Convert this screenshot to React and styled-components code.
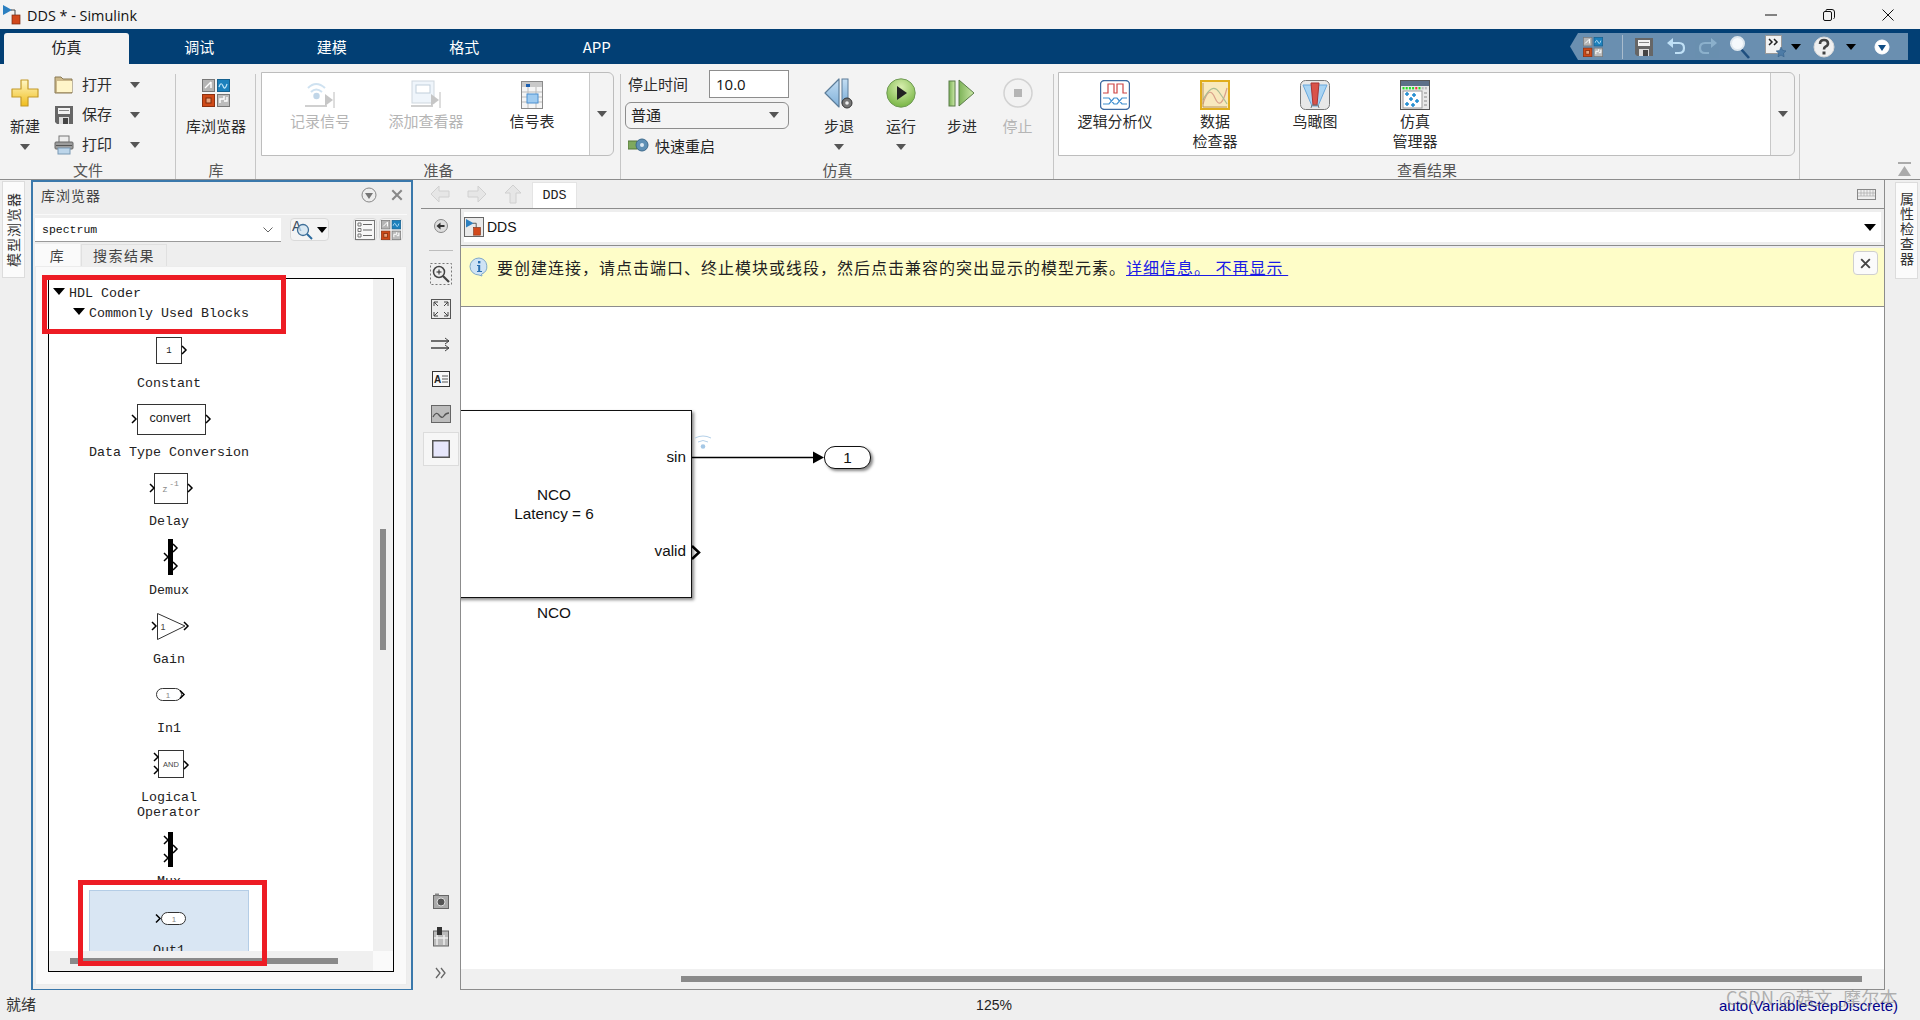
import React from "react";
import styled, { createGlobalStyle } from "styled-components";

const CJK = `"Noto Sans CJK SC", "Noto Sans", sans-serif`;
const MONO = `"Liberation Mono", "Noto Sans CJK SC", monospace`;
const ARIAL = `"Liberation Sans", Arial, sans-serif`;

const Global = createGlobalStyle`
  html, body { margin: 0; padding: 0; background: #efefef; }
  * { box-sizing: border-box; }
`;

const Page = styled.div`
  width: 1920px; height: 1020px; display: flex; flex-direction: column; overflow: hidden;
  font-family: ${CJK}; background: #efefef; color: #222; position: relative;
`;

/* ---------- Title bar ---------- */
const TitleBar = styled.div`
  height: 29px; background: #f3f3f3; display: flex; align-items: center; padding: 0 3px;
`;
const TitleText = styled.span`
  font-family: "Open Sans", sans-serif; font-size: 15px; margin-left: 4px; color: #111; transform: scaleX(.96); transform-origin: left;
`;
const WinControls = styled.div`display: flex; margin-left: auto;`;
const WinBtn = styled.div`width: 58.5px; height: 29px; display: flex; align-items: center; justify-content: center;`;

/* ---------- Tabs ---------- */
const TabStrip = styled.div`height: 35px; background: #023f74; display: flex; padding-left: 4px; align-items: flex-end;`;
const Tab = styled.div`
  width: ${p => p.$w}px; height: 31px; display: flex; align-items: center; justify-content: center; font-size: 15px;
  border-radius: 3px 3px 0 0; padding-bottom: 4px;
  color: ${p => (p.$active ? "#222" : "#fff")};
  background: ${p => (p.$active ? "#f3f3f3" : "transparent")};
  margin-right: ${p => p.$mr || 0}px;
`;
const Qat = styled.div`
  margin-left: auto; margin-right: 12px; height: 27px; margin-bottom: 4px; width: 338px; background: #6a8fb0; display: flex; align-items: center;
  clip-path: polygon(8px 0, 100% 0, 100% 100%, 8px 100%, 0 50%);
`;
const QatCell = styled.div`width: ${p => p.$w}px; height: 27px; display: flex; align-items: center; justify-content: center; padding-left: ${p => p.$pl || 0}px;`;
const QatSep = styled.div`width: 1px; height: 24px; background: #a9bccd;`;
const BlackTri = styled.div`width: 0; height: 0; border-left: 5px solid transparent; border-right: 5px solid transparent; border-top: 6px solid #000;`;

/* ---------- Ribbon ---------- */
const Ribbon = styled.div`height: 116px; background: #f3f3f3; display: flex; border-bottom: 1px solid #8c8c8c;`;
const Group = styled.div`
  width: ${p => p.$w}px; position: relative; height: 115px; padding-left: ${p => p.$pl || 0}px;
  &::after { content: ""; position: absolute; right: 0; top: 10px; bottom: 0; width: 1px; background: #c6c6c6; }
`;
const GroupBody = styled.div`display: flex; height: 98px;`;
const GroupLabel = styled.div`position: absolute; left: 0; right: 0; bottom: 0; height: 17px; line-height: 15px; text-align: center; font-size: 15px; color: #555;`;
const Large = styled.div`
  width: ${p => p.$w}px; display: flex; flex-direction: column; align-items: center; padding-top: 14px; flex: none;
`;
const IconBox = styled.div`height: ${p => p.$h || 30}px; display: flex; align-items: center; justify-content: center;`;
const RibbonText = styled.div`
  font-size: 15px; line-height: 20px; margin-top: ${p => p.$mt ?? 8}px; white-space: nowrap; text-align: center;
  color: ${p => (p.$off ? "#b5b5b5" : "#2b2b2b")};
`;
const GrayTri = styled.div`
  width: 0; height: 0; border-left: 5px solid transparent; border-right: 5px solid transparent; border-top: 6px solid #555; margin-top: ${p => p.$mt || 0}px;
`;
const FileCol = styled.div`display: flex; flex-direction: column; padding-top: 6px; margin-left: 4px;`;
const FileRow = styled.div`height: 30px; display: flex; align-items: center;`;
const FileIcon = styled.div`width: 20px; height: 20px; display: flex; align-items: center; justify-content: center; margin-right: 8px;`;
const FileText = styled.div`font-size: 15px; width: 30px; margin-right: 18px; color: #2b2b2b; padding-bottom: 3px;`;
const Gallery = styled.div`
  margin-top: 8px; height: 84px; width: ${p => p.$w}px; display: flex; border: 1px solid #bdbdbd; border-radius: 0 6px 6px 0; flex: none;
`;
const GalleryItems = styled.div`flex: 1; background: #fff; display: flex; padding-left: ${p => p.$pl}px;`;
const GalleryMore = styled.div`width: 24px; border-left: 1px solid #c8c8c8; display: flex; align-items: center; justify-content: center;`;
const GalleryBtn = styled.div`width: ${p => p.$w}px; display: flex; flex-direction: column; align-items: center; padding-top: 7px;`;
const SimSettings = styled.div`width: 164px; display: flex; flex-direction: column; padding-top: 6px; margin-right: 19px; flex: none;`;
const StopRow = styled.div`display: flex; align-items: center; justify-content: space-between; padding-left: 3px; height: 28px;`;
const SimLabel = styled.div`font-size: 15px; color: #2b2b2b; padding-bottom: 2px;`;
const StopInput = styled.div`width: 80px; height: 28px; border: 1px solid #8d8d8d; background: #fff; font-family: "Open Sans", sans-serif; font-size: 15px; line-height: 26px; padding-left: 6px; color: #111;`;
const ModeSelect = styled.div`
  margin-top: 4px; height: 27px; border: 1px solid #8d8d8d; border-radius: 6px; background: #f4f4f4; display: flex; align-items: center; justify-content: space-between;
  padding: 0 9px 2px 5px; font-size: 15px;
`;
const RestartRow = styled.div`margin-top: 5px; height: 24px; display: flex; align-items: center; gap: 5px; padding: 0 0 2px 3px; font-size: 15px;`;
const Collapse = styled.div`flex: 1; display: flex; align-items: flex-end; justify-content: flex-end; padding: 0 9px 3px 0;`;

/* ---------- Main ---------- */
const Main = styled.div`height: 810px; display: flex;`;
const LeftStrip = styled.div`width: 31px; flex: none; padding: 1px 0 0 2px;`;
const VTab = styled.div`
  width: 23px; height: 97px; background: #fbfbfb; border: 1px solid #dcdcdc; font-size: 14px; letter-spacing: 1px; color: #333;
  writing-mode: ${p => (p.$flip ? "sideways-lr" : "vertical-rl")}; display: flex; align-items: center; justify-content: center; line-height: 21px; padding-bottom: ${p => (p.$flip ? 0 : 3)}px;
`;
const LibPanel = styled.div`
  width: 382px; height: 811px; flex: none; border: 2px solid #3a78ab; background: #eee; position: relative; display: flex; flex-direction: column; padding: 0 4px 4px 2px;
`;
const PanelHead = styled.div`height: 32px; display: flex; align-items: center; padding: 0 0 6px 6px; font-size: 14px; letter-spacing: 1px; color: #444;`;
const PanelHeadIcons = styled.div`margin-left: auto; display: flex; align-items: center; gap: 14px; padding-right: 4px;`;
const ComboRow = styled.div`height: 30px; display: flex; align-items: flex-start; padding: 3px 0 0 0; border-top: 1px solid #f9f9f9;`;
const Combo = styled.div`
  width: 246px; height: 24px; background: #fff; border-bottom: 1px solid #9a9a9a; display: flex; align-items: center; justify-content: space-between;
  font-family: ${MONO}; font-size: 11.5px; padding: 0 8px 0 7px; color: #111; flex: none;
`;
const RoundBtn = styled.div`
  height: 23px; width: ${p => p.$w}px; margin-left: ${p => p.$ml}px; background: #f4f4f4; border: 1px solid #dadada; border-radius: 4px; display: flex; align-items: center; justify-content: center; flex: none; gap: 3px;
`;
const PanelTabs = styled.div`display: flex; height: 22px; flex: none;`;
const PanelTab = styled.div`
  width: ${p => p.$w}px; margin-right: 1px; display: flex; align-items: center; justify-content: center; font-size: 14px; letter-spacing: 1.5px; color: #444; padding-bottom: 2px;
  background: ${p => (p.$active ? "#fafafa" : "#eee")};
  border: 1px solid ${p => (p.$active ? "#fafafa" : "#e0e0e0")}; border-bottom: none;
`;
const PanelBody = styled.div`flex: 1; background: #fafafa; border: 1px solid #ececec; padding: 11px 12px 12px 12px; display: flex; min-height: 0;`;
const TreeFrame = styled.div`
  flex: 1; border: 1px solid #000; background: #fff; display: grid; grid-template-columns: 1fr 20px; grid-template-rows: 1fr 20px; min-height: 0; overflow: hidden;
`;
const TreeView = styled.div`overflow: hidden; padding-top: 4px; min-height: 0;`;
const TreeRow = styled.div`
  height: 20px; display: flex; align-items: center; padding-left: ${p => p.$indent}px; font-family: ${MONO}; font-size: 13.33px; color: #222; white-space: pre;
`;
const TreeArrow = styled.div`
  width: 0; height: 0; border-left: 6px solid transparent; border-right: 6px solid transparent; border-top: 7px solid #000; margin-right: 4px; margin-bottom: 4px;
`;
const ItemList = styled.div`margin-top: 12px; width: 240px; display: flex; flex-direction: column; align-items: center;`;
const Item = styled.div`
  width: 160px; margin-top: -12px; padding: 12px 0 13px; display: flex; flex-direction: column; align-items: center; flex: none;
  background: ${p => (p.$selected ? "#d9e6f3" : "transparent")};
  outline: ${p => (p.$selected ? "1px solid #b4cde6" : "none")};
  outline-offset: -1px;
`;
const ItemIcon = styled.svg`width: 100px; height: 30px; overflow: visible; display: block; flex: none;`;
const ItemLabel = styled.div`
  margin-top: 11px; font-family: ${MONO}; font-size: 13.33px; line-height: 15px; text-align: center; color: #222; white-space: pre-line;
`;
const VTrack = styled.div`background: #f0f0f0; padding-left: 7px;`;
const VThumb = styled.div`width: 6px; height: 121px; margin-top: 250px; background: #8a8a8a;`;
const HTrack = styled.div`background: #f0f0f0; padding: 7px 0 0 21px;`;
const HThumb = styled.div`width: 268px; height: 6px; background: #8a8a8a;`;
const Corner = styled.div`background: #fafafa;`;
const RedBox = styled.div`
  position: absolute; left: ${p => p.$x}px; top: ${p => p.$y}px; width: ${p => p.$w}px; height: ${p => p.$h}px; border: 5px solid #ed1c24; pointer-events: none;
`;

/* ---------- Editor ---------- */
const Editor = styled.div`width: 1464px; margin-left: 8px; flex: none; display: flex; flex-direction: column; border-right: 1px solid #8c8c8c;`;
const NavBar = styled.div`height: 29px; display: flex; align-items: flex-end; border-bottom: 1px solid #8c8c8c; flex: none;`;
const NavCell = styled.div`width: ${p => p.$w}px; height: 28px; display: flex; align-items: center; justify-content: center;`;
const DocTab = styled.div`
  width: 45px; height: 26px; margin-left: 1px; background: #fff; border: 1px solid #e4e4e4; border-bottom: none; font-family: ${MONO}; font-size: 13.33px; display: flex; align-items: center; justify-content: center; color: #222;
`;
const KeyCell = styled.div`margin-left: auto; margin-right: 8px; height: 28px; display: flex; align-items: center;`;
const EditorBody = styled.div`flex: 1; display: flex; min-height: 0;`;
const SideBar = styled.div`width: 39px; flex: none; display: flex; flex-direction: column; align-items: center;`;
const SideCell = styled.div`height: ${p => p.$h || 35}px; width: 36px; display: flex; align-items: center; justify-content: center; flex: none; margin-top: ${p => p.$mt || 0}px;`;
const SideActive = styled(SideCell)`background: #f6f6f6; border: 1px solid #dcdcdc;`;
const SideDivider = styled.div`width: 24px; height: 1px; background: #bdbdbd; margin: 7px 0 5px; flex: none;`;
const SideSpacer = styled.div`flex: 1;`;
const Content = styled.div`flex: 1; min-width: 0; display: flex; flex-direction: column; border-left: 1px solid #8c8c8c; border-bottom: 1px solid #8c8c8c;`;
const Address = styled.div`
  height: 37px; flex: none; border-bottom: 1px solid #8c8c8c; padding: 3px; background: #eee;
`;
const AddressInner = styled.div`height: 30px; background: #fff; display: flex; align-items: center; padding-right: 5px; font-family: ${ARIAL}; font-size: 14px; color: #111; gap: 3px;`;
const AddrIcon = styled.div`width: 20px; height: 20px; background: #e9e9e9; border: 1px solid #666; display: flex; align-items: center; justify-content: center;`;
const AddrTri = styled(BlackTri)`margin-left: auto; border-left-width: 6px; border-right-width: 6px; border-top-width: 7px;`;
const InfoBar = styled.div`
  height: 59px; margin-top: 2px; flex: none; background: #fefdc8; border-bottom: 1px solid #8c8c8c; display: flex; padding: 9px 6px 0 8px;
`;
const InfoText = styled.div`font-size: 16px; letter-spacing: 1px; line-height: 20px; margin-left: 8px; color: #222; white-space: pre;`;
const InfoLink = styled.span`color: #1a1ae6; text-decoration: underline;`;
const InfoClose = styled.div`
  margin-left: auto; margin-top: -6px; width: 25px; height: 24px; background: #fbfbfb; border: 1px solid #cfcfcf; border-radius: 4px; display: flex; align-items: center; justify-content: center;
`;
const Canvas = styled.div`flex: 1; background: #fff; position: relative; overflow: hidden; font-family: ${ARIAL}; font-size: 15.3px; color: #111;`;
const Block = styled.div`
  position: absolute; left: -45px; top: 103px; width: 276px; height: 188px; border: 1.5px solid #111; box-shadow: 2px 2px 3px #888; background: #fff;
`;
const BlockTitle = styled.div`position: absolute; left: 0; right: 0; top: 74px; text-align: center; line-height: 19px;`;
const BlockName = styled.div`position: absolute; left: 0; right: 0; top: 192px; text-align: center; line-height: 19px;`;
const PortLabel = styled.div`position: absolute; right: 5px; top: ${p => p.$y}px; line-height: 18px;`;
const Wires = styled.svg`position: absolute; left: 225px; top: 130px; width: 150px; height: 130px; overflow: visible;`;
const Outport = styled.div`
  position: absolute; left: 363px; top: 139px; width: 47px; height: 23px; border: 1.5px solid #111; border-radius: 11px; background: #fff; box-shadow: 2px 2px 3px #888;
  display: flex; align-items: center; justify-content: center;
`;
const HScroll = styled.div`height: 20px; flex: none; background: #f0f0f0; padding: 7px 0 0 220px;`;
const HScrollThumb = styled.div`width: 1181px; height: 6px; background: #8a8a8a;`;
const RightStrip = styled.div`flex: 1; padding: 2px 0 0 10px;`;

/* ---------- Status ---------- */
const Status = styled.div`
  height: 30px; display: grid; grid-template-columns: 974px 40px 1fr; align-items: center; background: #efefef; position: relative;
`;
const StatusLeft = styled.div`font-size: 15px; padding: 0 0 3px 6px; color: #333;`;
const StatusZoom = styled.div`font-family: ${ARIAL}; font-size: 14px; text-align: center; color: #222;`;
const StatusSolver = styled.div`font-family: ${ARIAL}; font-size: 15px; color: #00008b; text-align: right; padding-right: 22px;`;
const Watermark = styled.div`position: absolute; left: 1726px; top: -6px; font-family: "Noto Sans CJK SC", sans-serif; font-size: 18px; letter-spacing: .3px; color: rgba(120,120,120,.55); white-space: nowrap;`;

/* ---------- Icons ---------- */
const ModelIcon = ({ s = 20 }) => (
  <svg width={s} height={s} viewBox="0 0 20 20">
    <path d="M0 0l9 5-9 5z" fill="#2b7fc0" />
    <path d="M8 5h4v5" fill="none" stroke="#444" strokeWidth="1" />
    <rect x="9" y="10" width="8" height="9" fill="#d2491c" stroke="#7a2a10" strokeWidth=".7" />
  </svg>
);
const LibIcon = ({ s = 28 }) => (
  <svg width={s} height={s} viewBox="0 0 28 28">
    <rect x="0.5" y="0.5" width="12" height="12" fill="#b4b4b4" stroke="#777" />
    <path d="M3 9l6-6M9 3v6" stroke="#fff" strokeWidth="1.4" fill="none" />
    <rect x="15.5" y="0.5" width="12" height="12" fill="#1c81bd" stroke="#15608e" />
    <path d="M17 8q2-6 4-1t4-2" stroke="#bfe4f8" strokeWidth="1.2" fill="none" />
    <rect x="0.5" y="15.5" width="12" height="12" fill="#cf4a18" stroke="#8c3010" />
    <rect x="4" y="19" width="5" height="5" fill="#e9a37e" stroke="#7c2a0c" />
    <rect x="15.5" y="15.5" width="12" height="12" fill="#bcbcbc" stroke="#777" />
    <path d="M18 24v-4h4v-3M25 18v4h-3" stroke="#fff" strokeWidth="1.4" fill="none" />
  </svg>
);
const NewIcon = () => (
  <svg width="30" height="30" viewBox="0 0 30 30">
    <defs><linearGradient id="pl" x1="0" y1="0" x2="0" y2="1"><stop offset="0" stopColor="#fff7c4" /><stop offset="1" stopColor="#f0bd1c" /></linearGradient></defs>
    <path d="M11 2h7v9h10v8H18v9h-7v-9H2v-8h9z" fill="url(#pl)" stroke="#c39a2a" strokeWidth="1.2" strokeLinejoin="round" />
  </svg>
);
const FolderIcon = () => (
  <svg width="20" height="20" viewBox="0 0 20 20">
    <path d="M1 2h6l2 2h9v14H1z" fill="#cdb98b" stroke="#8a7a55" />
    <path d="M3 6h15v11H3z" fill="#fff5c9" />
  </svg>
);
const SaveIcon = ({ s = 20 }) => (
  <svg width={s} height={s} viewBox="0 0 20 20">
    <path d="M1 1h18v18H3l-2-2z" fill="#666" />
    <rect x="4" y="3" width="12" height="6" fill="#f2f2f2" />
    <rect x="5" y="5" width="10" height="1" fill="#888" />
    <rect x="5" y="12" width="10" height="7" fill="#ddd" />
    <rect x="9" y="13" width="5" height="6" fill="#444" />
  </svg>
);
const PrintIcon = () => (
  <svg width="20" height="20" viewBox="0 0 20 20">
    <rect x="5" y="1" width="10" height="7" fill="#eee" stroke="#777" />
    <rect x="1" y="7" width="18" height="7" rx="1" fill="#9c9c9c" stroke="#666" />
    <rect x="2" y="10" width="16" height="1" fill="#555" />
    <rect x="4" y="13" width="12" height="6" fill="#bcd5ea" stroke="#7b9ab5" />
  </svg>
);
const RecordIcon = () => (
  <svg width="30" height="30" viewBox="0 0 30 30" opacity=".55">
    <path d="M3 8Q11 0 20 8M6 12q5-5 11 0" stroke="#a9cbe6" strokeWidth="2" fill="none" />
    <circle cx="11.5" cy="16" r="3.2" fill="#8fb6d6" />
    <path d="M0 26h22" stroke="#aaa" strokeWidth="2" />
    <path d="M20 20l8 6-8 6z" transform="translate(0 -6)" fill="#999" />
    <path d="M29 12v16" stroke="#888" />
  </svg>
);
const ViewerIcon = () => (
  <svg width="30" height="30" viewBox="0 0 30 30" opacity=".55">
    <rect x="1" y="1" width="22" height="22" fill="#e2eef8" stroke="#a9b8c5" />
    <rect x="5" y="5" width="14" height="8" fill="#fff" stroke="#8fa9bf" />
    <path d="M0 26h22" stroke="#aaa" strokeWidth="2" />
    <path d="M20 20l8 6-8 6z" transform="translate(0 -6)" fill="#999" />
    <path d="M29 12v16" stroke="#888" />
  </svg>
);
const TableIcon = () => (
  <svg width="22" height="28" viewBox="0 0 22 28">
    <rect x="0.5" y="0.5" width="21" height="27" fill="#f5f5f5" stroke="#8a8a8a" />
    <rect x="1" y="1" width="20" height="5" fill="#c9c9c9" />
    <rect x="5" y="3" width="4" height="3" fill="#1c5fb0" />
    <path d="M1 11h20M1 16h20M1 21h20M7 6v21M15 6v21" stroke="#bbb" />
    <rect x="6" y="13" width="11" height="9" fill="#9fcbf0" stroke="#4b8fd0" />
  </svg>
);
const StepBackIcon = () => (
  <svg width="30" height="34" viewBox="0 0 30 34">
    <defs><linearGradient id="sb" x1="0" y1="0" x2="0" y2="1"><stop offset="0" stopColor="#c4def3" /><stop offset="1" stopColor="#7fb0d9" /></linearGradient></defs>
    <path d="M1 17L15 3v28z" fill="url(#sb)" stroke="#5c7d99" strokeWidth="1.2" strokeLinejoin="round" />
    <rect x="18" y="3" width="6" height="24" fill="url(#sb)" stroke="#5c7d99" />
    <circle cx="23" cy="27" r="5" fill="#777" stroke="#333" />
    <circle cx="23" cy="27" r="1.8" fill="#eee" />
  </svg>
);
const RunIcon = () => (
  <svg width="30" height="30" viewBox="0 0 30 30">
    <defs><radialGradient id="rn" cx=".5" cy=".3" r=".8"><stop offset="0" stopColor="#d9efb0" /><stop offset="1" stopColor="#6aad35" /></radialGradient></defs>
    <circle cx="15" cy="15" r="14.2" fill="url(#rn)" stroke="#6f9a55" />
    <path d="M11 8l10 7-10 7z" fill="#222" />
  </svg>
);
const StepFwdIcon = () => (
  <svg width="28" height="30" viewBox="0 0 28 30">
    <defs><linearGradient id="sf" x1="0" y1="0" x2="1" y2="0"><stop offset="0" stopColor="#7cb257" /><stop offset="1" stopColor="#cde9a9" /></linearGradient></defs>
    <rect x="1" y="3" width="6" height="25" fill="url(#sf)" stroke="#5a7d48" />
    <path d="M11 2l15 13-15 13z" fill="url(#sf)" stroke="#5a7d48" strokeLinejoin="round" />
  </svg>
);
const StopIcon = () => (
  <svg width="30" height="30" viewBox="0 0 30 30">
    <circle cx="15" cy="15" r="14" fill="#f2f2f2" stroke="#d2d2d2" strokeWidth="1.5" />
    <rect x="11" y="11" width="8" height="8" fill="#b5b5b5" />
  </svg>
);
const RestartIcon = () => (
  <svg width="22" height="14" viewBox="0 0 22 14">
    <rect x="0" y="3" width="9" height="8" fill="#7fa95d" stroke="#55773b" />
    <circle cx="14" cy="7" r="6" fill="#5f90b5" stroke="#3d6a8c" />
    <circle cx="14" cy="7" r="2" fill="#dce9f3" />
  </svg>
);
const LogicIcon = () => (
  <svg width="30" height="30" viewBox="0 0 30 30">
    <rect x=".5" y=".5" width="29" height="29" rx="4" fill="#fff" stroke="#3d6aa0" strokeWidth="1.4" />
    <path d="M3 13h5V4h6v9h3V4h6v9h4" fill="none" stroke="#cd4545" strokeWidth="1.2" />
    <path d="M3 18h6l5 6h3l5-6h5M3 24h6l5-6h3l5 6h5" fill="none" stroke="#3f8fd0" strokeWidth="1.2" />
  </svg>
);
const InspectIcon = () => (
  <svg width="30" height="30" viewBox="0 0 30 30">
    <rect x="1" y="1" width="28" height="28" fill="#f8e9bd" stroke="#e0ad1c" strokeWidth="2" />
    <path d="M3 24Q9 4 15 18T27 8" fill="none" stroke="#d9a08a" strokeWidth="1.2" />
    <path d="M3 20Q12 2 19 12T27 24" fill="none" stroke="#a9bd94" strokeWidth="1.2" />
    <path d="M3 3v24h24" fill="none" stroke="#b89660" />
  </svg>
);
const BirdIcon = () => (
  <svg width="30" height="30" viewBox="0 0 30 30">
    <rect x=".5" y=".5" width="29" height="29" rx="5" fill="#e8e8e8" stroke="#777" />
    <path d="M3 5h24L18 26h-6z" fill="#a9d4f3" stroke="#6aa8dc" />
    <path d="M11 3h8l-2 22h-4z" fill="#d9534a" stroke="#a33" />
    <path d="M11 28l1-3h6l1 3" fill="none" stroke="#777" />
  </svg>
);
const SimMgrIcon = () => (
  <svg width="30" height="30" viewBox="0 0 30 30">
    <rect x=".5" y=".5" width="29" height="29" fill="#e9e9e9" stroke="#555" />
    <rect x="1" y="1" width="28" height="5" fill="#5d7088" />
    {["#2d2", "#2d2", "#2d2", "#2d2", "#e33", "#2d2", "#bbb", "#bbb"].map((c, i) => <rect key={i} x={2.5 + i * 3.2} y="7" width="2" height="2.4" fill={c} />)}
    <rect x="3" y="11" width="19" height="17" fill="#fff" stroke="#999" />
    {[[7, 14], [14, 15], [11, 19], [17, 21], [7, 24], [13, 25]].map(([x, y], i) => <path key={i} d={`M${x - 2} ${y}h4M${x} ${y - 2}v4`} stroke="#1d8bd0" strokeWidth="1.5" />)}
    <path d="M24 13h3M24 17h3M24 21h3M24 25h3" stroke="#888" />
  </svg>
);
const UndoIcon = ({ off }) => (
  <svg width="20" height="20" viewBox="0 0 20 20" opacity={off ? 0.4 : 1}>
    <g transform={off ? "translate(20 0) scale(-1 1)" : undefined}>
      <path d="M4 6h9q5 0 5 5t-5 5h-4" fill="none" stroke="#bfe0f6" strokeWidth="2.2" />
      <path d="M7 1L1 6l6 5z" fill="#bfe0f6" />
    </g>
  </svg>
);
const SearchIcon = () => (
  <svg width="22" height="24" viewBox="0 0 22 24">
    <path d="M12 14l8 9" stroke="#1f4f7f" strokeWidth="2.6" />
    <circle cx="8.500" cy="8.500" r="6.500" fill="#f5f9fc" stroke="#dfe8ef" strokeWidth="2" />
  </svg>
);
const PublishIcon = () => (
  <svg width="22" height="24" viewBox="0 0 22 24">
    <rect x=".5" y=".5" width="16" height="18" fill="#f2f2f2" stroke="#999" />
    <path d="M4 4l3 3-3 3M9 4l3 3-3 3" fill="none" stroke="#222" strokeWidth="1.5" />
    <path d="M16 12l1.600 3.400 3.400.5-2.500 2.400.6 3.500-3.100-1.700-3 1.700.6-3.500-2.500-2.400 3.400-.5z" fill="#4d7ba6" stroke="#2d5a85" strokeWidth=".5" />
  </svg>
);
const HelpIcon = () => (
  <svg width="22" height="22" viewBox="0 0 22 22">
    <circle cx="11" cy="11" r="10" fill="#f0f0f0" stroke="#d8d8d8" />
    <path d="M7 8q0-4 4-4t4 3.400q0 2-2.500 3.300-1.500.8-1.500 2.800" fill="none" stroke="#444" strokeWidth="2.600" />
    <rect x="9.500" y="15.500" width="3" height="3" fill="#444" />
  </svg>
);
const CircleDown = ({ s = 16, fg = "#0e4d85", bg = "#fff", ring = "#fff" }) => (
  <svg width={s} height={s} viewBox="0 0 16 16">
    <circle cx="8" cy="8" r="7" fill={bg} stroke={ring} />
    <path d="M4 6h8l-4 6z" fill={fg} />
  </svg>
);
const MinIcon = () => <svg width="14" height="14" viewBox="0 0 14 14"><path d="M1 7h12" stroke="#111" /></svg>;
const MaxIcon = () => <svg width="14" height="14" viewBox="0 0 14 14"><rect x="1.500" y="3.500" width="8" height="9" rx="1.500" fill="none" stroke="#111" /><path d="M4 3V2.500q0-1 1-1h5q2.500 0 2.500 2.500v5.500q0 1-1 1" fill="none" stroke="#111" /></svg>;
const CloseIcon = ({ s = 14, c = "#111", w = 1 }) => <svg width={s} height={s} viewBox="0 0 14 14"><path d="M1.500 1.500l11 11M12.500 1.500l-11 11" stroke={c} strokeWidth={w} /></svg>;
const NavArrow = ({ dir }) => {
  const rot = { left: 0, right: 180, up: 90 }[dir];
  return (
    <svg width="20" height="20" viewBox="0 0 20 20">
      <path d="M1 10l8-8v5h10v6H9v5z" transform={`rotate(${rot} 10 10)`} fill="#e6e6e6" stroke="#d0d0d0" />
    </svg>
  );
};
const FindIcon = () => (
  <svg width="22" height="22" viewBox="0 0 22 22">
    <text x="0" y="12" fontFamily="Liberation Sans" fontSize="14" fill="#3d4d5e">A</text>
    <circle cx="11" cy="11" r="5.500" fill="#cfe2f1" fillOpacity=".7" stroke="#3f6f98" strokeWidth="1.300" />
    <path d="M15 15l5 5" stroke="#2a6a9e" strokeWidth="2" />
  </svg>
);
const ListIcon = () => (
  <svg width="20" height="20" viewBox="0 0 20 20">
    <rect x=".5" y=".5" width="19" height="19" fill="#f7f7f7" stroke="#777" />
    <path d="M3 3h3v3H3zM3 8.500h3v3H3zM3 14h3v3H3z" fill="none" stroke="#777" />
    <path d="M8 4.500h9M8 10h9M8 15.500h9" stroke="#666" />
  </svg>
);
const BackIcon = () => (
  <svg width="16" height="16" viewBox="0 0 16 16">
    <circle cx="8" cy="8" r="6.500" fill="#ddd" stroke="#888" />
    <path d="M3.500 8l4-3.500V7h4v2h-4v2.500z" fill="#333" />
  </svg>
);
const ZoomIcon = () => (
  <svg width="22" height="22" viewBox="0 0 22 22">
    <rect x=".5" y=".5" width="21" height="21" fill="none" stroke="#777" strokeDasharray="2 2" />
    <circle cx="9" cy="9" r="5.500" fill="#eee" stroke="#444" strokeWidth="1.500" />
    <path d="M6.500 9h5M9 6.500v5" stroke="#222" />
    <path d="M13 13l6 6" stroke="#444" strokeWidth="2.200" />
  </svg>
);
const FitIcon = () => (
  <svg width="20" height="20" viewBox="0 0 20 20">
    <rect x=".5" y=".5" width="19" height="19" fill="#ececec" stroke="#555" />
    <path d="M3 7V3h4M13 3h4v4M17 13v4h-4M7 17H3v-4M3 3l4 4M17 3l-4 4M17 17l-4-4M3 17l4-4" fill="none" stroke="#444" />
  </svg>
);
const RouteIcon = () => (
  <svg width="20" height="16" viewBox="0 0 20 16">
    <path d="M0 5h18M0 12h18" stroke="#444" strokeWidth="1.300" />
    <path d="M14 2l4 3-4 3M14 9l4 3-4 3" fill="none" stroke="#444" />
  </svg>
);
const NoteIcon = () => (
  <svg width="18" height="16" viewBox="0 0 18 16">
    <rect x=".5" y=".5" width="17" height="15" fill="#f8f8f8" stroke="#333" />
    <text x="2" y="12" fontFamily="Liberation Sans" fontSize="10" fontWeight="700" fill="#222">A</text>
    <path d="M10 5h6M10 8h6M10 11h6" stroke="#555" />
  </svg>
);
const ImgIcon = () => (
  <svg width="20" height="18" viewBox="0 0 20 18">
    <rect x=".5" y=".5" width="19" height="17" fill="#bcbcbc" stroke="#666" />
    <path d="M2 12q3-6 6-2t5 1 5-3" fill="none" stroke="#555" strokeWidth="1.300" />
  </svg>
);
const CamIcon = () => (
  <svg width="16" height="16" viewBox="0 0 16 16">
    <rect x=".5" y="2.500" width="15" height="13" fill="#aaa" stroke="#666" />
    <rect x="2" y=".5" width="4" height="2" fill="#888" />
    <circle cx="8" cy="9" r="4" fill="#555" stroke="#ddd" />
  </svg>
);
const PropIcon = () => (
  <svg width="16" height="20" viewBox="0 0 16 20">
    <rect x=".5" y="4" width="15" height="15" fill="#bbb" stroke="#666" />
    <rect x="4" y="0" width="5" height="8" fill="#333" />
    <path d="M4 8v10M11 8v10M1 11h14" stroke="#eee" strokeWidth="1.500" />
  </svg>
);
const Chevrons = () => (
  <svg width="14" height="12" viewBox="0 0 14 12"><path d="M2 1l4 5-4 5M7 1l4 5-4 5" fill="none" stroke="#666" strokeWidth="1.300" /></svg>
);
const KeyIcon = () => (
  <svg width="19" height="11" viewBox="0 0 19 11">
    <rect x=".5" y=".5" width="18" height="10" fill="#eee" stroke="#888" />
    <path d="M1 4h17M1 7h17M4 1v6M7 1v6M10 1v6M13 1v6M16 1v6" stroke="#aaa" strokeWidth=".7" />
  </svg>
);
const InfoIcon = () => (
  <svg width="20" height="20" viewBox="0 0 20 20">
    <path d="M10 1a9 8.500 0 1 0 0 17l3 1-.5-1.800A9 8.500 0 0 0 10 1z" fill="#cfe3f5" stroke="#7fa8c9" />
    <rect x="9" y="4" width="2.400" height="2.400" fill="#2a6fb0" />
    <path d="M8 8h3.200v6H13v1H8v-1h1.200V9H8z" fill="#2a6fb0" />
  </svg>
);

const Chev = ({ x, y, r = 4 }) => <path d={`M${x} ${y - r}l${r} ${r}-${r} ${r}`} fill="none" stroke="#000" strokeWidth="1.500" />;
const LBL = { fontFamily: "Liberation Sans", fill: "#444", textAnchor: "middle" };

const items = [
  { label: "Constant", icon: <><rect x="37.500" y="2.500" width="25" height="26" fill="#fff" stroke="#333" /><text x="50" y="18" fontFamily="Liberation Mono" fontSize="9" fill="#222" textAnchor="middle">1</text><Chev x={63} y={15} /></> },
  { label: "Data Type Conversion", icon: <><rect x="18.500" y=".5" width="68" height="30" fill="#fff" stroke="#333" /><text x="51" y="18" fontSize="12.500" {...LBL} fill="#222">convert</text><Chev x={13} y={15} /><Chev x={87} y={15} /></> },
  { label: "Delay", icon: <><rect x="35.500" y=".5" width="33" height="30" fill="#fff" stroke="#333" /><text x="46" y="19" fontFamily="Liberation Mono" fontSize="9" fill="#888" textAnchor="middle">z</text><text x="55" y="13" fontFamily="Liberation Mono" fontSize="8" fill="#888" textAnchor="middle">-1</text><Chev x={31} y={15} /><Chev x={69} y={15} /></> },
  { label: "Demux", icon: <><rect x="49" y="-3" width="5" height="36" fill="#000" /><Chev x={45} y={15} /><Chev x={54} y={6} /><Chev x={54} y={24} /></> },
  { label: "Gain", icon: <><path d="M38.500 2.500L66 15 38.500 28.500z" fill="#fff" stroke="#333" /><text x="44" y="19" fontSize="9" {...LBL}>1</text><Chev x={33} y={15} /><Chev x={65} y={15} /></> },
  { label: "In1", icon: <><rect x="37.500" y="8.500" width="25" height="12" rx="6" fill="#fff" stroke="#333" /><text x="49" y="18" fontSize="8" {...LBL} fill="#888">1</text><Chev x={61} y={14.500} /></> },
  { label: "Logical\nOperator", icon: <><rect x="39.500" y="1.500" width="25" height="27" fill="#fff" stroke="#333" /><text x="52" y="18" fontSize="7.500" {...LBL}>AND</text><Chev x={35} y={8} /><Chev x={35} y={21} /><Chev x={65} y={16} /></> },
  { label: "Mux", icon: <><rect x="49" y="-1" width="5" height="35" fill="#000" /><Chev x={45} y={7} /><Chev x={45} y={25} /><Chev x={54} y={16} /></> },
  { label: "Out1", selected: true, icon: <><rect x="42.500" y="10.500" width="24" height="12" rx="6" fill="#fff" stroke="#333" /><text x="55" y="20" fontSize="8" {...LBL} fill="#888">1</text><Chev x={37} y={16.500} /></> },
];

const MoreTri = () => <GrayTri />;

export default function App() {
  return (
    <Page>
      <Global />
      <TitleBar>
        <ModelIcon />
        <TitleText>DDS * - Simulink</TitleText>
        <WinControls>
          <WinBtn><MinIcon /></WinBtn>
          <WinBtn><MaxIcon /></WinBtn>
          <WinBtn><CloseIcon /></WinBtn>
        </WinControls>
      </TitleBar>

      <TabStrip>
        <Tab $active $w={125} $mr={4}>仿真</Tab>
        <Tab $w={132.500}>调试</Tab>
        <Tab $w={132.500}>建模</Tab>
        <Tab $w={132.500}>格式</Tab>
        <Tab $w={132.500}>APP</Tab>
        <Qat>
          <QatCell $w={46}><LibIcon s={20} /></QatCell>
          <QatCell $w={12}><QatSep /></QatCell>
          <QatCell $w={32}><SaveIcon /></QatCell>
          <QatCell $w={32}><UndoIcon /></QatCell>
          <QatCell $w={32}><UndoIcon off /></QatCell>
          <QatCell $w={32}><SearchIcon /></QatCell>
          <QatCell $w={34} $pl={6}><PublishIcon /></QatCell>
          <QatCell $w={12}><BlackTri /></QatCell>
          <QatCell $w={44}><HelpIcon /></QatCell>
          <QatCell $w={10}><BlackTri /></QatCell>
          <QatCell $w={52}><CircleDown /></QatCell>
        </Qat>
      </TabStrip>

      <Ribbon>
        <Group $w={176}>
          <GroupBody>
            <Large $w={50}>
              <IconBox><NewIcon /></IconBox>
              <RibbonText>新建</RibbonText>
              <GrayTri $mt={8} />
            </Large>
            <FileCol>
              <FileRow><FileIcon><FolderIcon /></FileIcon><FileText>打开</FileText><MoreTri /></FileRow>
              <FileRow><FileIcon><SaveIcon /></FileIcon><FileText>保存</FileText><MoreTri /></FileRow>
              <FileRow><FileIcon><PrintIcon /></FileIcon><FileText>打印</FileText><MoreTri /></FileRow>
            </FileCol>
          </GroupBody>
          <GroupLabel>文件</GroupLabel>
        </Group>
        <Group $w={80}>
          <GroupBody>
            <Large $w={80}>
              <IconBox><LibIcon /></IconBox>
              <RibbonText>库浏览器</RibbonText>
            </Large>
          </GroupBody>
          <GroupLabel>库</GroupLabel>
        </Group>
        <Group $w={365} $pl={5}>
          <GroupBody>
            <Gallery $w={353}>
              <GalleryItems $pl={5}>
                <GalleryBtn $w={106}><IconBox><RecordIcon /></IconBox><RibbonText $off $mt={1}>记录信号</RibbonText></GalleryBtn>
                <GalleryBtn $w={106}><IconBox><ViewerIcon /></IconBox><RibbonText $off $mt={1}>添加查看器</RibbonText></GalleryBtn>
                <GalleryBtn $w={106}><IconBox><TableIcon /></IconBox><RibbonText $mt={1}>信号表</RibbonText></GalleryBtn>
              </GalleryItems>
              <GalleryMore><GrayTri /></GalleryMore>
            </Gallery>
          </GroupBody>
          <GroupLabel>准备</GroupLabel>
        </Group>
        <Group $w={433} $pl={4}>
          <GroupBody>
            <SimSettings>
              <StopRow><SimLabel>停止时间</SimLabel><StopInput>10.0</StopInput></StopRow>
              <ModeSelect>普通<GrayTri /></ModeSelect>
              <RestartRow><RestartIcon />快速重启</RestartRow>
            </SimSettings>
            <Large $w={62}><IconBox><StepBackIcon /></IconBox><RibbonText>步退</RibbonText><GrayTri $mt={8} /></Large>
            <Large $w={62}><IconBox><RunIcon /></IconBox><RibbonText>运行</RibbonText><GrayTri $mt={8} /></Large>
            <Large $w={60}><IconBox><StepFwdIcon /></IconBox><RibbonText>步进</RibbonText></Large>
            <Large $w={51}><IconBox><StopIcon /></IconBox><RibbonText $off>停止</RibbonText></Large>
          </GroupBody>
          <GroupLabel>仿真</GroupLabel>
        </Group>
        <Group $w={746} $pl={4}>
          <GroupBody>
            <Gallery $w={737}>
              <GalleryItems $pl={6}>
                <GalleryBtn $w={100}><IconBox><LogicIcon /></IconBox><RibbonText $mt={1}>逻辑分析仪</RibbonText></GalleryBtn>
                <GalleryBtn $w={100}><IconBox><InspectIcon /></IconBox><RibbonText $mt={1}>数据<br />检查器</RibbonText></GalleryBtn>
                <GalleryBtn $w={100}><IconBox><BirdIcon /></IconBox><RibbonText $mt={1}>鸟瞰图</RibbonText></GalleryBtn>
                <GalleryBtn $w={100}><IconBox><SimMgrIcon /></IconBox><RibbonText $mt={1}>仿真<br />管理器</RibbonText></GalleryBtn>
              </GalleryItems>
              <GalleryMore><GrayTri /></GalleryMore>
            </Gallery>
          </GroupBody>
          <GroupLabel>查看结果</GroupLabel>
        </Group>
        <Collapse>
          <svg width="13" height="14" viewBox="0 0 13 14"><rect y="0" width="13" height="2" fill="#aaa" /><path d="M6.500 4L13 14H0z" fill="#aaa" /></svg>
        </Collapse>
      </Ribbon>

      <Main>
        <LeftStrip><VTab $flip>模型浏览器</VTab></LeftStrip>
        <LibPanel>
          <PanelHead>
            库浏览器
            <PanelHeadIcons>
              <CircleDown fg="#777" bg="#eee" ring="#888" />
              <CloseIcon s={12} c="#888" w={2.400} />
            </PanelHeadIcons>
          </PanelHead>
          <ComboRow>
            <Combo>
              spectrum
              <svg width="10" height="6" viewBox="0 0 10 6"><path d="M.5.5L5 5 9.500.5" fill="none" stroke="#666" /></svg>
            </Combo>
            <RoundBtn $w={39} $ml={9}><FindIcon /><BlackTri /></RoundBtn>
            <RoundBtn $w={24} $ml={24}><ListIcon /></RoundBtn>
            <RoundBtn $w={24} $ml={2}><LibIcon s={20} /></RoundBtn>
          </ComboRow>
          <PanelTabs>
            <PanelTab $active $w={45}>库</PanelTab>
            <PanelTab $w={86}>搜索结果</PanelTab>
          </PanelTabs>
          <PanelBody>
            <TreeFrame>
              <TreeView>
                <TreeRow $indent={4}><TreeArrow />HDL Coder</TreeRow>
                <TreeRow $indent={24}><TreeArrow />Commonly Used Blocks</TreeRow>
                <ItemList>
                  {items.map(it => (
                    <Item key={it.label} $selected={it.selected}>
                      <ItemIcon viewBox="0 0 100 30">{it.icon}</ItemIcon>
                      <ItemLabel>{it.label}</ItemLabel>
                    </Item>
                  ))}
                </ItemList>
              </TreeView>
              <VTrack><VThumb /></VTrack>
              <HTrack><HThumb /></HTrack>
              <Corner />
            </TreeFrame>
          </PanelBody>
          <RedBox $x={9} $y={93} $w={244} $h={59} />
          <RedBox $x={45} $y={698} $w={189} $h={86} />
        </LibPanel>

        <Editor>
          <NavBar>
            <NavCell $w={38}><NavArrow dir="left" /></NavCell>
            <NavCell $w={36}><NavArrow dir="right" /></NavCell>
            <NavCell $w={36}><NavArrow dir="up" /></NavCell>
            <DocTab>DDS</DocTab>
            <KeyCell><KeyIcon /></KeyCell>
          </NavBar>
          <EditorBody>
            <SideBar>
              <SideCell $h={34}><BackIcon /></SideCell>
              <SideDivider />
              <SideCell><ZoomIcon /></SideCell>
              <SideCell><FitIcon /></SideCell>
              <SideCell><RouteIcon /></SideCell>
              <SideCell><NoteIcon /></SideCell>
              <SideCell><ImgIcon /></SideCell>
              <SideActive $h={34} $mt={1}>
                <svg width="18" height="18" viewBox="0 0 18 18"><rect x=".75" y=".75" width="16.500" height="16.500" fill="#e6e6fb" stroke="#555" strokeWidth="1.500" /></svg>
              </SideActive>
              <SideSpacer />
              <SideCell $h={36}><CamIcon /></SideCell>
              <SideCell $h={36}><PropIcon /></SideCell>
              <SideCell><Chevrons /></SideCell>
            </SideBar>
            <Content>
              <Address>
                <AddressInner>
                  <AddrIcon><ModelIcon s={17} /></AddrIcon>
                  DDS
                  <AddrTri />
                </AddressInner>
              </Address>
              <InfoBar>
                <InfoIcon />
                <InfoText>要创建连接，请点击端口、终止模块或线段，然后点击兼容的突出显示的模型元素。<InfoLink>详细信息。 不再显示 </InfoLink></InfoText>
                <InfoClose><CloseIcon s={11} c="#444" w={2.400} /></InfoClose>
              </InfoBar>
              <Canvas>
                <Block>
                  <BlockTitle>NCO<br />Latency = 6</BlockTitle>
                  <PortLabel $y={37}>sin</PortLabel>
                  <PortLabel $y={131}>valid</PortLabel>
                  <BlockName>NCO</BlockName>
                </Block>
                <Wires viewBox="0 0 150 130">
                  <path d="M6 20.500h125" stroke="#000" strokeWidth="1.300" />
                  <path d="M127 14.500l11 6-11 6z" fill="#000" />
                  <path d="M6 109l7 6.500-7 6.500" fill="none" stroke="#000" strokeWidth="2.500" />
                  <path d="M9 1q8-4 16 0M12 5q5-3 10 0" fill="none" stroke="#b4d0e8" strokeWidth="1" />
                  <circle cx="17" cy="9.500" r="2.300" fill="#a5c8e6" />
                </Wires>
                <Outport>1</Outport>
              </Canvas>
              <HScroll><HScrollThumb /></HScroll>
            </Content>
          </EditorBody>
        </Editor>
        <RightStrip><VTab>属性检查器</VTab></RightStrip>
      </Main>

      <Status>
        <StatusLeft>就绪</StatusLeft>
        <StatusZoom>125%</StatusZoom>
        <StatusSolver>auto(VariableStepDiscrete)</StatusSolver>
        <Watermark>CSDN @菇文_摩尔本</Watermark>
      </Status>
    </Page>
  );
}
